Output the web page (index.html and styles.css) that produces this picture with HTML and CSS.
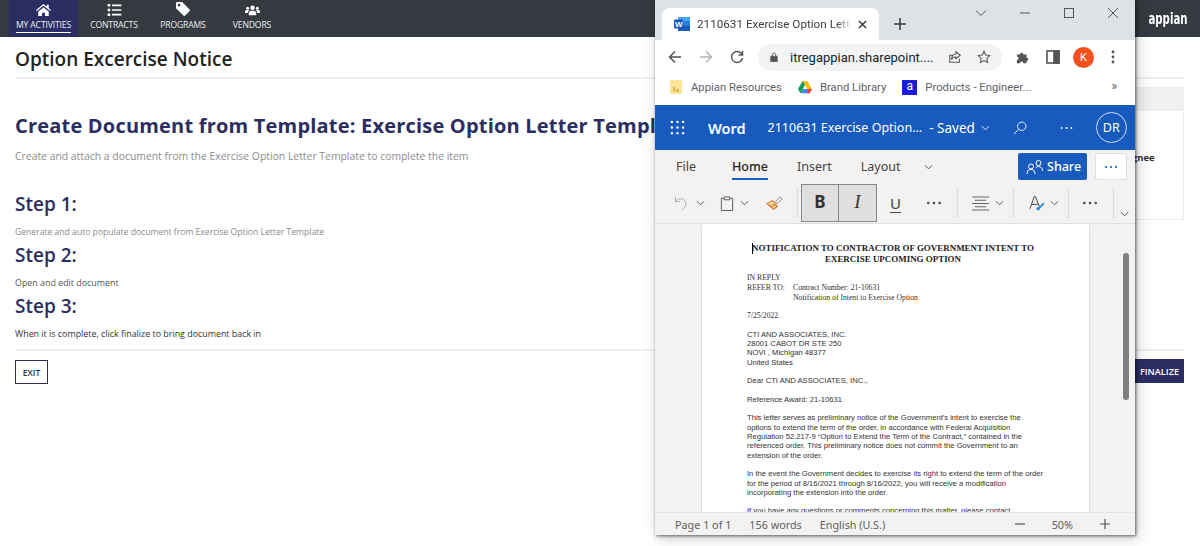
FILE: index.html
```html
<!DOCTYPE html>
<html lang="en">
<head>
<meta charset="utf-8">
<title>Option Excercise Notice</title>
<link rel="stylesheet" href="styles.css">
</head>
<body>
<header class="topbar">
  <nav class="nav">
    <a class="nav-item active">
      <svg class="nav-icon" viewBox="0 0 20 16"><path d="M10 0 0 8l1 1.4L10 2.2l9 7.2L20 8l-3-2.400V1h-2.500v2.600zM3 10v6h5v-4.500h4V16h5v-6l-7-5.500z"/></svg>
      <span class="nav-label">MY ACTIVITIES</span>
    </a>
    <a class="nav-item">
      <svg class="nav-icon" viewBox="0 0 16 14"><path d="M0 0h3v3H0zM5 .5h11v2H5zM0 5.500h3v3H0zM5 6h11v2H5zM0 11h3v3H0zM5 11.500h11v2H5z"/></svg>
      <span class="nav-label">CONTRACTS</span>
    </a>
    <a class="nav-item">
      <svg class="nav-icon tag" viewBox="0 0 16 16"><path fill-rule="evenodd" d="M0 1.500A1.500 1.500 0 0 1 1.500 0H7l8.500 8.500a1.500 1.500 0 0 1 0 2L10.500 15.500a1.500 1.500 0 0 1-2 0L0 7zM3.500 2a1.500 1.500 0 1 0 0 3 1.500 1.500 0 0 0 0-3z"/></svg>
      <span class="nav-label">PROGRAMS</span>
    </a>
    <a class="nav-item">
      <svg class="nav-icon" viewBox="0 0 20 14"><circle cx="10" cy="4" r="3"/><circle cx="3.500" cy="4.500" r="2"/><circle cx="16.500" cy="4.500" r="2"/><path d="M5 14v-2.500C5 9.500 6.500 8 8 8h4c1.500 0 3 1.500 3 3.500V14zM0 11V9c0-1 1-2 2-2h2.500l1 .8C4.500 8.500 3.800 9.700 3.700 11zM20 11V9c0-1-1-2-2-2h-2.500l-1 .8c1 .7 1.700 1.900 1.800 3.200z"/></svg>
      <span class="nav-label">VENDORS</span>
    </a>
  </nav>
  <div class="brand">
    <span class="avatar-back"></span>
    <span class="brand-name">appian</span>
  </div>
</header>

<main class="page">
  <h1 class="page-title">Option Excercise Notice</h1>
  <div class="columns">
    <section class="content">
      <h2 class="doc-title">Create Document from Template: Exercise Option Letter Template</h2>
      <p class="subtitle">Create and attach a document from the Exercise Option Letter Template to complete the item</p>
      <h3 class="step first">Step 1:</h3>
      <p class="step-text light">Generate and auto populate document from Exercise Option Letter Template</p>
      <h3 class="step">Step 2:</h3>
      <p class="step-text mid">Open and edit document</p>
      <h3 class="step">Step 3:</h3>
      <p class="step-text">When it is complete, click finalize to bring document back in</p>
    </section>
    <aside class="side">
      <div class="side-head"></div>
      <div class="side-body"><span class="assignee">Assignee</span></div>
    </aside>
  </div>
  <div class="actions">
    <button class="btn-exit">EXIT</button>
    <button class="btn-finalize">FINALIZE</button>
  </div>
</main>

<div class="window">
  <div class="tabstrip">
    <div class="tab">
      <svg class="tab-icon" viewBox="0 0 16 16"><rect x="4" y="1" width="12" height="14" rx="1" fill="#2b7cd3"/><rect x="4" y="1" width="12" height="4" fill="#41a5ee"/><rect x="4" y="10" width="12" height="5" fill="#185abd"/><rect y="3.500" width="9" height="9" rx="1" fill="#185abd"/><text x="1" y="10.500" class="tab-w">W</text></svg>
      <span class="tab-title">2110631 Exercise Option Letter</span>
      <svg class="tab-close" viewBox="0 0 10 10"><path d="M1 1l8 8M9 1l-8 8"/></svg>
    </div>
    <svg class="new-tab" viewBox="0 0 12 12"><path d="M6 0v12M0 6h12"/></svg>
    <div class="win-controls">
      <svg class="wc" viewBox="0 0 12 12"><path d="M1 3.500l5 5 5-5"/></svg>
      <svg class="wc" viewBox="0 0 12 12"><path d="M1 6h10"/></svg>
      <svg class="wc" viewBox="0 0 12 12"><rect x="1.500" y="1.500" width="9" height="9"/></svg>
      <svg class="wc" viewBox="0 0 12 12"><path d="M1 1l10 10M11 1L1 11"/></svg>
    </div>
  </div>

  <div class="toolbar">
    <svg class="tb-ico" viewBox="0 0 14 14"><path d="M13 7H1.500M7 1.500 1.500 7 7 12.500"/></svg>
    <svg class="tb-ico dim" viewBox="0 0 14 14"><path d="M1 7h11.500M7 1.500 12.500 7 7 12.500"/></svg>
    <svg class="tb-ico" viewBox="0 0 14 14"><path d="M12 4.500A5.500 5.500 0 1 0 12.500 8M12.500 1v4h-4"/></svg>
    <div class="omnibox">
      <svg class="lock" viewBox="0 0 10 12"><path d="M1 5h8v7H1z"/><path class="shackle" d="M3 5V3a2 2 0 0 1 4 0v2"/></svg>
      <span class="url">itregappian.sharepoint....</span>
      <svg class="omni-ico share-page" viewBox="0 0 16 16"><path d="M13 10v4H2V6h3M9 2l5 4-5 4V8C6 8 4.500 9.500 4 11c0-4 2-6.500 5-6.500z"/></svg>
      <svg class="omni-ico star" viewBox="0 0 16 16"><path d="M8 1.500l2 4.300 4.600.6-3.400 3.200.9 4.700L8 12l-4.100 2.300.9-4.700L1.400 6.400 6 5.800z"/></svg>
    </div>
    <svg class="ext" viewBox="0 0 16 16"><path d="M1 5h3.500a2 2 0 1 1 4 0H12v3.500a2 2 0 1 1 0 4V15H8.500a2 2 0 1 0-4 0H1v-3.500a2 2 0 1 0 0-4z"/></svg>
    <svg class="side-ico" viewBox="0 0 14 14"><rect x="1" y="1" width="12" height="12"/><rect x="8" y="1" width="5" height="12" class="side-fill"/></svg>
    <span class="profile">K</span>
    <svg class="kebab" viewBox="0 0 4 14"><circle cx="2" cy="2" r="1.400"/><circle cx="2" cy="7" r="1.400"/><circle cx="2" cy="12" r="1.400"/></svg>
  </div>

  <div class="bookmarks">
    <span class="bm">
      <svg class="bm-ico folder" viewBox="0 0 12 14"><rect width="12" height="14" rx="1" fill="#fce39a"/><path d="M3 7h2v5H3zM6 9h3v3H6z" fill="#e0b84c"/></svg>
      Appian Resources
    </span>
    <span class="bm">
      <svg class="bm-ico" viewBox="0 0 16 14"><path d="M5.300 0h5.400l5.300 9.200h-5.400z" fill="#fbbc04"/><path d="M5.300 9.200H16L13.300 14H2.700z" fill="#4285f4"/><path d="M5.300 0 0 9.200 2.700 14 8 4.600z" fill="#0f9d58"/><path d="M16 9.200 13.300 14H10l2-4.800z" fill="#ea4335"/></svg>
      Brand Library
    </span>
    <span class="bm">
      <span class="bm-a">a</span>
      Products - Engineer...
    </span>
    <span class="bm-more">»</span>
  </div>

  <div class="word-bar">
    <svg class="waffle" viewBox="0 0 16 16"><g><circle cx="2" cy="2" r="1.300"/><circle cx="8" cy="2" r="1.300"/><circle cx="14" cy="2" r="1.300"/><circle cx="2" cy="8" r="1.300"/><circle cx="8" cy="8" r="1.300"/><circle cx="14" cy="8" r="1.300"/><circle cx="2" cy="14" r="1.300"/><circle cx="8" cy="14" r="1.300"/><circle cx="14" cy="14" r="1.300"/></g></svg>
    <span class="word-name">Word</span>
    <span class="word-doc">2110631 Exercise Option...</span>
    <span class="word-saved">- Saved</span>
    <svg class="chev white" viewBox="0 0 10 6"><path d="M1 1l4 4 4-4"/></svg>
    <svg class="word-search" viewBox="0 0 16 16"><circle cx="10" cy="6" r="4.800"/><path d="M6.500 9.500 1 15"/></svg>
    <svg class="word-dots" viewBox="0 0 16 4"><circle cx="2" cy="2" r="1.200"/><circle cx="8" cy="2" r="1.200"/><circle cx="14" cy="2" r="1.200"/></svg>
    <span class="word-user">DR</span>
  </div>

  <div class="ribbon">
    <div class="ribbon-tabs">
      <span class="rt file">File</span>
      <span class="rt selected">Home</span>
      <span class="rt">Insert</span>
      <span class="rt layout">Layout</span>
      <svg class="chev rt-chev" viewBox="0 0 10 6"><path d="M1 1l4 4 4-4"/></svg>
      <span class="share">
        <svg class="share-ico" viewBox="0 0 18 14"><circle cx="5" cy="6.500" r="2.500"/><path d="M1 14c0-3 1.500-4.500 4-4.500s4 1.500 4 4.500"/><circle cx="12.500" cy="3" r="2.500"/><path d="M10 7.500c.8-.8 1.500-1 2.500-1 2.500 0 4 1.500 4 4.500"/></svg>
        Share
      </span>
      <span class="more-box"><svg class="dots blue" viewBox="0 0 14 3"><circle cx="2" cy="1.500" r="1.100"/><circle cx="7" cy="1.500" r="1.100"/><circle cx="12" cy="1.500" r="1.100"/></svg></span>
    </div>
    <div class="ribbon-tools">
      <svg class="t-undo" viewBox="0 0 16 16"><path d="M1 1v5h5M1 6c3-3 6-4 9-2 3 2 3 7-2 11"/></svg>
      <svg class="chev t-c c1" viewBox="0 0 10 6"><path d="M1 1l4 4 4-4"/></svg>
      <svg class="t-clip" viewBox="0 0 14 16"><path d="M3.500 2.500H1v13h12v-13h-2.500M4 1h6v3H4z"/></svg>
      <svg class="chev t-c c2" viewBox="0 0 10 6"><path d="M1 1l4 4 4-4"/></svg>
      <svg class="t-brush" viewBox="0 0 18 16"><path d="M1 8l6-3 5 6-4 3z" fill="#f7e3c2" stroke="#d9822b" stroke-width="1.300"/><path d="M3 10l7-1M5 12l5-2" stroke="#d9822b"/><path d="M10 6l5-5 2 2-5 5z" fill="#fff" stroke="#777"/></svg>
      <span class="t-sep s1"></span>
      <span class="t-box bold">B</span>
      <span class="t-box ital">I</span>
      <span class="t-u">U</span>
      <svg class="dots t-dots" viewBox="0 0 14 3"><circle cx="2" cy="1.500" r="1.100"/><circle cx="7" cy="1.500" r="1.100"/><circle cx="12" cy="1.500" r="1.100"/></svg>
      <span class="t-sep s2"></span>
      <svg class="t-align" viewBox="0 0 18 16"><path d="M0 1h18M3 4.500h12M0 8h18M3 11.500h12M0 15h18"/></svg>
      <svg class="chev t-c c3" viewBox="0 0 10 6"><path d="M1 1l4 4 4-4"/></svg>
      <span class="t-sep s3"></span>
      <svg class="t-style" viewBox="0 0 18 18"><path d="M1 15 6 1h1l5 12M3 10h7" fill="none" stroke="#444" stroke-width="1.100"/><path d="M8 16c0-3 2-3 3-3l5-5 1.500 1.500-5 5c0 2-2 2.500-4 1.500z" fill="#3b8ede"/></svg>
      <svg class="chev t-c c4" viewBox="0 0 10 6"><path d="M1 1l4 4 4-4"/></svg>
      <span class="t-sep s3"></span>
      <svg class="dots t-dots2" viewBox="0 0 14 3"><circle cx="2" cy="1.500" r="1.100"/><circle cx="7" cy="1.500" r="1.100"/><circle cx="12" cy="1.500" r="1.100"/></svg>
      <span class="t-sep s4"></span>
      <svg class="chev t-end" viewBox="0 0 10 6"><path d="M1 1l4 4 4-4"/></svg>
    </div>
  </div>

  <div class="doc-area">
    <article class="sheet">
      <p class="letter-title"><span class="caret"></span>NOTIFICATION TO CONTRACTOR OF GOVERNMENT INTENT TO<br>EXERCISE UPCOMING OPTION</p>
      <div class="serif reply">
        <p class="in-reply">IN REPLY</p>
        <p class="refer"><span class="refer-label">REFER TO:</span><span>Contract Number: 21-10631<br>Notification of Intent to Exercise Option</span></p>
      </div>
      <p class="serif date">7/25/2022</p>
      <p class="sans">CTI AND ASSOCIATES, INC.<br>28001 CABOT DR STE 250<br>NOVI , Michigan 48377<br>United States</p>
      <p class="sans">Dear CTI AND ASSOCIATES, INC.,</p>
      <p class="sans">Reference Award: 21-10631</p>
      <p class="sans">This letter serves as preliminary notice of the Government's intent to exercise the<br>options to extend the term of the order, in accordance with Federal Acquisition<br>Regulation 52.217-9 “Option to Extend the Term of the Contract,” contained in the<br>referenced order. This preliminary notice does not commit the Government to an<br>extension of the order.</p>
      <p class="sans">In the event the Government decides to exercise its right to extend the term of the order<br>for the period of 8/16/2021 through 8/16/2022, you will receive a modification<br>incorporating the extension into the order.</p>
      <p class="sans">If you have any questions or comments concerning this matter, please contact</p>
    </article>
    <span class="scroll-thumb"></span>
  </div>

  <footer class="status">
    <span class="st">Page 1 of 1</span>
    <span class="st">156 words</span>
    <span class="st">English (U.S.)</span>
    <span class="zoom">
      <svg class="z-ico" viewBox="0 0 12 12"><path d="M1 6h10"/></svg>
      <span class="st">50%</span>
      <svg class="z-ico" viewBox="0 0 12 12"><path d="M1 6h10M6 1v10"/></svg>
    </span>
  </footer>
</div>
</body>
</html>
```
FILE: styles.css
```css
* { box-sizing: border-box; }
html, body { margin: 0; height: 100%; }
body { width: 1200px; height: 546px; overflow: hidden; background: #fff; font-family: "Open Sans", sans-serif; color: #222; position: relative; }
p, h1, h2, h3 { margin: 0; }

/* Appian header */
.topbar { height: 37px; background: #343a40; display: flex; justify-content: space-between; align-items: center; color: #fff; }
.nav { display: flex; height: 37px; padding-left: 9px; }
.nav-item { display: flex; flex-direction: column; align-items: center; width: 69px; padding-top: 4px; }
.nav-item:nth-child(2) { width: 70px; margin-left: 1px; }
.nav-item:nth-child(3) { width: 72px; margin-left: -2px; }
.nav-item:nth-child(4) { width: 60px; margin-left: 3px; }
.nav-item.active { background: #2b2e63; }
.nav-icon { width: 15px; height: 12px; fill: #fff; display: block; }
.nav-icon.tag { width: 14px; height: 14px; margin-top: -2px; }
.nav-label { font-size: 8.600px; line-height: 11px; margin-top: 4px; white-space: nowrap; letter-spacing: -.15px; color: #eceef0; }
.active .nav-label { border-bottom: 1px solid #fff; padding-bottom: 1px; }
.brand { display: flex; align-items: center; padding-right: 12px; height: 37px; }
.avatar-back { width: 14px; height: 22px; background: #d9d9d9; border-radius: 0 11px 11px 0; margin-right: -3px; }
.brand-name { font-family: "DejaVu Sans", sans-serif; font-weight: 700; font-size: 15px; transform: scaleX(.68); transform-origin: right; }

/* Appian page */
.page { padding: 0 16px 0 15px; }
.page-title { height: 42px; font-size: 19px; line-height: 44px; font-weight: 600; color: #222; border-bottom: 2px solid #eee; }
.columns { display: flex; justify-content: space-between; height: 272px; border-bottom: 2px solid #eee; }
.content { width: 900px; flex: none; padding-top: 33px; white-space: nowrap; }
.doc-title { font-size: 20px; line-height: 28px; font-weight: 700; color: #2b2e5f; letter-spacing: .2px; }
.subtitle { font-size: 10.400px; line-height: 14px; color: #8c8c8c; margin-top: 9px; }
.step { font-size: 19px; line-height: 26px; font-weight: 600; color: #2b2e5f; margin-top: 4px; }
.step.first { margin-top: 28px; }
.step-text { font-size: 8.900px; line-height: 12px; margin-top: 9px; color: #333; }
.step-text.light { color: #8a8a8a; font-size: 8.600px; }
.step-text.mid { color: #555; }
.side { width: 250px; margin-top: 8px; height: 133px; border: 1px solid #eee; }
.side-head { height: 23px; background: #f0f0f0; }
.side-body { padding: 40px 0 0 178px; }
.assignee { display: block; font-size: 9.500px; line-height: 13px; font-weight: 700; color: #333; }
.actions { display: flex; justify-content: space-between; margin-top: 9px; align-items: flex-start; }
.btn-exit { width: 33px; height: 24px; padding: 0; background: #fff; border: 1px solid #2b2e5f; font: 600 8.500px "Open Sans", sans-serif; color: #333; }
.btn-finalize { width: 80px; height: 24px; margin-top: -1px; padding: 0 0 0 31px; background: #2b2e63; border: 0; color: #fff; font: 600 9.200px "Open Sans", sans-serif; text-align: center; }

/* Browser window */
.window { position: absolute; left: 655px; top: 0; width: 480px; height: 535px; background: #fff; box-shadow: 1px 1px 3px rgba(0,0,0,.6), 3px 3px 14px rgba(0,0,0,.2); display: flex; flex-direction: column; font-family: "Noto Sans", sans-serif; }
.tabstrip { height: 40px; background: #dee1e6; display: flex; align-items: flex-end; padding-left: 7px; flex: none; font-family: Roboto, sans-serif; }
.tab { width: 217px; height: 32px; background: #fff; border-radius: 8px 8px 0 0; display: flex; align-items: center; padding: 0 8px 0 12px; }
.tab-icon { width: 16px; height: 16px; flex: none; }
.tab-w { font: 700 8px "Liberation Sans", sans-serif; fill: #fff; }
.tab-title { font-size: 11.700px; margin-left: 7px; color: #3c4043; white-space: nowrap; overflow: hidden; width: 155px; flex: none; -webkit-mask-image: linear-gradient(90deg, #000 90%, transparent); mask-image: linear-gradient(90deg, #000 90%, transparent); }
.tab-close { width: 9px; height: 9px; margin-left: 6px; stroke: #333; stroke-width: 1.600; fill: none; flex: none; }
.new-tab { width: 12px; height: 12px; margin: 0 0 10px 15px; stroke: #333; stroke-width: 1.500; fill: none; }
.win-controls { display: flex; margin-left: auto; align-self: flex-start; padding: 7px 16px 0 0; gap: 32px; }
.wc { width: 12px; height: 12px; stroke: #555; stroke-width: 1; fill: none; }
.toolbar { height: 34px; display: flex; align-items: center; flex: none; padding-left: 13px; background: #fff; font-family: Roboto, sans-serif; }
.tb-ico { width: 14px; height: 14px; stroke: #555; stroke-width: 1.500; fill: none; margin-right: 17px; flex: none; }
.tb-ico.dim { stroke: #b5b5b5; }
.omnibox { margin-left: -3px; width: 244px; height: 27px; border-radius: 14px; background: #f1f3f4; display: flex; align-items: center; padding-left: 12px; flex: none; }
.lock { width: 8px; height: 10px; fill: #555; stroke: #555; flex: none; }
.lock .shackle { fill: none; }
.url { font-size: 13px; color: #222; margin-left: 12px; white-space: nowrap; width: 144px; flex: none; }
.omni-ico { width: 14px; height: 14px; stroke: #555; fill: none; stroke-width: 1.200; flex: none; }
.share-page { margin-left: 14px; }
.star { margin-left: 15px; }
.ext { width: 14px; height: 14px; fill: #555; margin-left: 14px; flex: none; }
.side-ico { width: 14px; height: 14px; margin-left: 16px; fill: #fff; stroke: #555; stroke-width: 1.600; flex: none; }
.side-ico .side-fill { fill: #555; stroke: #555; }
.profile { width: 21px; height: 21px; border-radius: 50%; background: #f4511e; color: #fff; font-size: 11px; line-height: 21px; text-align: center; margin-left: 13px; flex: none; }
.kebab { width: 4px; height: 14px; fill: #555; margin-left: 17px; flex: none; }
.bookmarks { height: 31px; display: flex; align-items: center; padding: 0 0 5px 15px; flex: none; font-size: 11.300px; color: #5f6368; position: relative; background: #fff; font-family: Roboto, sans-serif; }
.bm { display: flex; align-items: center; margin-right: 16px; white-space: nowrap; }
.bm-ico { width: 14px; height: 14px; margin-right: 8px; flex: none; }
.bm-ico.folder { width: 12px; margin-right: 9px; }
.bm-a { width: 15px; height: 15px; background: #1a1ae0; color: #fff; text-align: center; line-height: 13px; font-size: 12px; margin-right: 8px; flex: none; }
.bm-more { position: absolute; right: 18px; top: 5px; font-size: 12px; color: #555; }
.word-bar { height: 45px; background: #185abd; color: #fff; display: flex; align-items: center; flex: none; padding-left: 15px; }
.waffle { width: 15px; height: 15px; fill: #fff; flex: none; }
.word-name { font-size: 14.500px; font-weight: 600; margin-left: 23px; }
.word-doc { font-size: 12.500px; margin-left: 22px; white-space: nowrap; }
.word-saved { font-size: 13.500px; margin-left: 7px; white-space: nowrap; }
.chev { width: 9px; height: 6px; stroke: #444; fill: none; stroke-width: 1; flex: none; }
.chev.white { stroke: #fff; margin-left: 6px; }
.word-search { width: 14px; height: 14px; stroke: #fff; fill: none; stroke-width: 1; margin-left: 23px; flex: none; }
.word-dots { width: 13px; height: 4px; fill: #fff; margin-left: 33px; flex: none; }
.word-user { width: 31px; height: 31px; border: 1px solid #cfe0f5; border-radius: 50%; font-size: 12.500px; line-height: 29px; text-align: center; margin-left: 23px; flex: none; }
.ribbon { height: 74px; background: #f3f2f1; flex: none; border-bottom: 1px solid #e1dfdd; display: flex; flex-direction: column; }
.ribbon-tabs { height: 33px; display: flex; align-items: center; padding: 0 8px 0 21px; font-size: 12.500px; color: #444; flex: none; }
.rt { position: relative; margin-right: 29px; white-space: nowrap; }
.rt.file { margin-right: 36px; }
.rt.layout { margin-right: 24px; }
.rt.selected { font-weight: 500; color: #222; }
.rt.selected::after { content: ""; position: absolute; left: 0; right: 0; bottom: -5px; height: 2px; background: #185abd; }
.share { display: flex; align-items: center; width: 69px; height: 27px; background: #185abd; color: #fff; font-weight: 500; margin-left: auto; border-radius: 2px; padding-left: 8px; gap: 3px; flex: none; }
.share-ico { width: 18px; height: 14px; stroke: #fff; stroke-width: 1; fill: none; }
.more-box { display: flex; align-items: center; justify-content: center; width: 32px; height: 27px; background: #fff; border: 1px solid #e1dfdd; margin-left: 8px; border-radius: 2px; flex: none; }
.dots { width: 16px; height: 4px; fill: #444; flex: none; }
.dots.blue { fill: #185abd; width: 14px; }
.ribbon-tools { display: flex; align-items: center; height: 40px; padding-left: 19px; position: relative; }
.t-undo { width: 16px; height: 15px; stroke: #aaa; fill: none; flex: none; }
.c1 { margin-left: 6px; }
.c2 { margin-left: 6px; }
.c3 { margin-left: 6px; }
.c4 { margin-left: 5px; }
.t-clip { width: 14px; height: 15px; stroke: #555; fill: none; margin-left: 15px; flex: none; }
.t-brush { width: 17px; height: 15px; margin-left: 17px; flex: none; }
.t-sep { width: 1px; height: 30px; background: #dcdad8; flex: none; }
.s1 { margin-left: 14px; }
.s2 { margin-left: 15px; }
.s3 { margin-left: 9px; }
.s4 { margin-left: 15px; }
.t-box { width: 38px; height: 38px; background: #e1dfdd; border: 1px solid #8a8886; color: #333; text-align: center; font-size: 17px; line-height: 34px; flex: none; }
.bold { font-weight: 700; margin-left: 3px; }
.ital { font-family: "Liberation Serif", serif; font-style: italic; font-size: 19px; margin-left: -1px; width: 39px; }
.t-u { font-size: 15px; margin-left: 13px; color: #444; text-decoration: underline; text-underline-offset: 3px; width: 12px; }
.t-dots { margin-left: 24px; }
.t-align { width: 17px; height: 15px; stroke: #666; stroke-width: 1.100; fill: none; margin-left: 14px; flex: none; }
.t-style { width: 16px; height: 17px; margin-left: 15px; flex: none; }
.t-dots2 { margin-left: 13px; }
.t-end { position: absolute; right: 6px; bottom: 6px; }
.doc-area { flex: 1; min-height: 0; background: #f3f2f1; overflow: hidden; position: relative; padding-left: 47px; }
.sheet { width: 387px; min-height: 300px; background: #fff; box-shadow: 0 0 2px rgba(0,0,0,.25); padding: 18px 46px 0 45px; color: #333; }
.letter-title { font: 700 8.950px/11px "Liberation Serif", serif; text-align: center; color: #222; white-space: nowrap; margin: 1px -14px 0 -18px; position: relative; }
.caret { position: absolute; left: 23px; top: 0; width: 1px; height: 11px; background: #000; }
.serif { font: 7.700px/9.300px "Liberation Serif", serif; }
.sans { font: 7.650px/9.300px "Liberation Sans", sans-serif; margin-bottom: 9.300px; white-space: nowrap; }
.reply { margin-top: 8px; }
.in-reply { margin-bottom: 1px; }
.refer { display: flex; }
.refer-label { width: 46px; flex: none; }
.date { margin: 9.300px 0; }
.scroll-thumb { position: absolute; right: 6px; top: 29px; width: 6px; height: 147px; background: #7f7f7f; border-radius: 3px; }
.status { height: 23px; background: #f3f2f1; border-top: 1px solid #e8e6e4; display: flex; align-items: center; padding-left: 20px; flex: none; font-size: 10.800px; color: #605e5c; gap: 18px; }
.zoom { display: flex; align-items: center; margin-left: auto; padding-right: 24px; }
.z-ico { width: 12px; height: 12px; stroke: #555; fill: none; stroke-width: 1.200; flex: none; }
.zoom .st { margin: 0 26px; }
```
